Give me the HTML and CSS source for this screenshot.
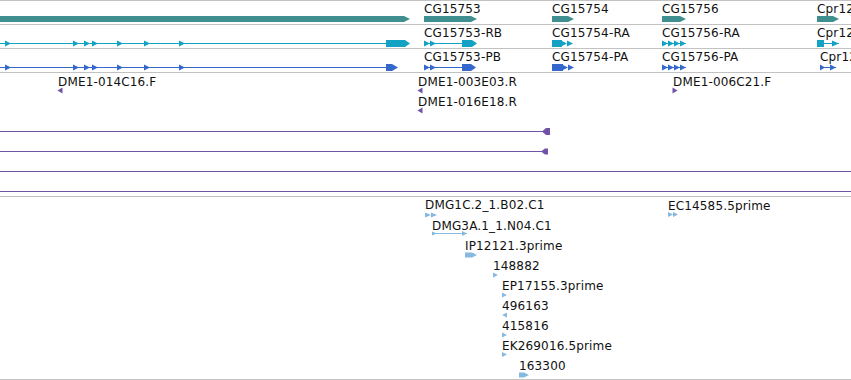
FILE: index.html
```html
<!DOCTYPE html>
<html lang="en">
  <head>
    <meta charset="UTF-8" />
    <meta name="viewport" content="width=device-width, initial-scale=1.0" />
    <title>Genome Browser</title>
    <link rel="stylesheet" href="styles.css">
  </head>

  <body>
    <div class="browser">
      <!-- genes -->
      <div class="track track-gene">
        <svg class="canvas" viewBox="0 1 851 23" width="851" height="23">
          <g class="gene">
            <polygon points="0,16 404,16 410,19 404,22 0,22" />
            <polygon points="424,16 471,16 477,19 471,22 424,22" />
            <polygon points="552,16 568,16 574,19 568,22 552,22" />
            <polygon points="662,16 680,16 686,19 680,22 662,22" />
            <polygon points="817,16 833,16 839,19 833,22 817,22" />
          </g>
          <text class="lbl" x="424" y="13">CG15753</text>
          <text class="lbl" x="552" y="13">CG15754</text>
          <text class="lbl" x="662" y="13">CG15756</text>
          <text class="lbl" x="817" y="13">Cpr12A</text>
        </svg>
      </div>

      <!-- transcripts -->
      <div class="track track-tx">
        <svg class="canvas" viewBox="0 25 851 23" width="851" height="23">
          <g class="tx">
            <line x1="0" y1="43.5" x2="386" y2="43.5" />
            <polygon points="5,40.5 11,43.5 5,46.5" />
            <polygon points="73,40.5 79,43.5 73,46.5" />
            <polygon points="84,40.5 90,43.5 84,46.5" />
            <polygon points="92,40.5 98,43.5 92,46.5" />
            <polygon points="117,40.5 123,43.5 117,46.5" />
            <polygon points="144,40.5 150,43.5 144,46.5" />
            <polygon points="179,40.5 185,43.5 179,46.5" />
            <polygon points="386,40 405,40 410,43.5 405,47 386,47" />

            <line x1="424" y1="43.5" x2="462" y2="43.5" />
            <polygon points="424,40.5 430,43.5 424,46.5" />
            <polygon points="430,40.5 436,43.5 430,46.5" />
            <polygon points="462,40 472,40 477,43.5 472,47 462,47" />

            <polygon points="552,40 562,40 562,47 552,47" />
            <polygon points="561,40.5 567,43.5 561,46.5" />
            <polygon points="567,40.5 573,43.5 567,46.5" />

            <line x1="662" y1="43.5" x2="686" y2="43.5" />
            <polygon points="662,40.5 668,43.5 662,46.5" />
            <polygon points="668,40.5 674,43.5 668,46.5" />
            <polygon points="674,40.5 680,43.5 674,46.5" />
            <polygon points="680,40.5 686,43.5 680,46.5" />

            <line x1="817" y1="43.5" x2="839" y2="43.5" />
            <polygon points="817,40 824,40 824,47 817,47" />
            <polygon points="832,40.5 839,43.5 832,46.5" />
          </g>
          <text class="lbl" x="424" y="37">CG15753-RB</text>
          <text class="lbl" x="552" y="37">CG15754-RA</text>
          <text class="lbl" x="662" y="37">CG15756-RA</text>
          <text class="lbl" x="817" y="37">Cpr12A-RA</text>
        </svg>
      </div>

      <!-- polypeptides -->
      <div class="track track-pp">
        <svg class="canvas" viewBox="0 49 851 23" width="851" height="23">
          <g class="pp">
            <line x1="0" y1="67.5" x2="386" y2="67.5" />
            <polygon points="5,64.5 11,67.5 5,70.5" />
            <polygon points="73,64.5 79,67.5 73,70.5" />
            <polygon points="84,64.5 90,67.5 84,70.5" />
            <polygon points="92,64.5 98,67.5 92,70.5" />
            <polygon points="117,64.5 123,67.5 117,70.5" />
            <polygon points="144,64.5 150,67.5 144,70.5" />
            <polygon points="179,64.5 185,67.5 179,70.5" />
            <polygon points="386,64 392,64 398,67.5 392,71 386,71" />

            <line x1="424" y1="67.5" x2="462" y2="67.5" />
            <polygon points="424,64.5 430,67.5 424,70.5" />
            <polygon points="430,64.5 436,67.5 430,70.5" />
            <polygon points="462,64 471,64 476,67.5 471,71 462,71" />

            <polygon points="552,64 563,64 563,71 552,71" />
            <polygon points="562,64.5 568,67.5 562,70.5" />
            <polygon points="568,64.5 574,67.5 568,70.5" />

            <line x1="662" y1="67.5" x2="686" y2="67.5" />
            <polygon points="662,64.5 668,67.5 662,70.5" />
            <polygon points="668,64.5 674,67.5 668,70.5" />
            <polygon points="674,64.5 680,67.5 674,70.5" />
            <polygon points="680,64.5 686,67.5 680,70.5" />

            <line x1="820" y1="67.5" x2="836" y2="67.5" />
            <polygon points="820,64.5 825,67.5 820,70.5" />
            <polygon points="830,64.5 836,67.5 830,70.5" />
          </g>
          <text class="lbl" x="424" y="61">CG15753-PB</text>
          <text class="lbl" x="552" y="61">CG15754-PA</text>
          <text class="lbl" x="662" y="61">CG15756-PA</text>
          <text class="lbl" x="820" y="61">Cpr12A-PA</text>
        </svg>
      </div>

      <!-- ESTs / BAC ends -->
      <div class="track track-est">
        <svg class="canvas" viewBox="0 73 851 123" width="851" height="123">
          <text class="lbl" x="58" y="86">DME1-014C16.F</text>
          <text class="lbl" x="418" y="86">DME1-003E03.R</text>
          <text class="lbl" x="418" y="106">DME1-016E18.R</text>
          <text class="lbl" x="673" y="86">DME1-006C21.F</text>
          <g class="est">
            <polygon points="57.5,90.5 62.5,87.5 62.5,93.5" />
            <polygon points="417.5,90.5 422.5,87.5 422.5,93.5" />
            <polygon points="417.5,110.5 422.5,107.5 422.5,113.5" />
            <polygon points="672.5,87.5 677.5,90.5 672.5,93.5" />

            <line x1="0" y1="131.5" x2="545" y2="131.5" />
            <polygon points="542,131.5 546,128 550,128 550,135 546,135" />
            <line x1="0" y1="151.5" x2="544" y2="151.5" />
            <polygon points="541,151.5 545,148.5 548,148.5 548,154.5 545,154.5" />
            <line x1="0" y1="171.5" x2="851" y2="171.5" />
            <line x1="0" y1="191.5" x2="851" y2="191.5" />
          </g>
        </svg>
      </div>

      <!-- cDNA / EST hits -->
      <div class="track track-cdna">
        <svg class="canvas" viewBox="0 197 851 182" width="851" height="182">
          <text class="lbl" x="425" y="209">DMG1C.2_1.B02.C1</text>
          <text class="lbl" x="432" y="230">DMG3A.1_1.N04.C1</text>
          <text class="lbl" x="465" y="250">IP12121.3prime</text>
          <text class="lbl" x="493" y="270">148882</text>
          <text class="lbl" x="502" y="290">EP17155.3prime</text>
          <text class="lbl" x="502" y="310">496163</text>
          <text class="lbl" x="502" y="330">415816</text>
          <text class="lbl" x="502" y="350">EK269016.5prime</text>
          <text class="lbl" x="519" y="370">163300</text>
          <text class="lbl" x="668" y="210">EC14585.5prime</text>
          <g class="cdna">
            <polygon points="425,212.5 431,215 425,217.5" />
            <polygon points="431,212.5 437,215 431,217.5" />

            <line x1="432" y1="233.5" x2="467" y2="233.5" />
            <polygon points="432,231.5 437,233.5 432,235.5" />
            <polygon points="462,231 467,233.5 462,236" />

            <polygon points="465,252.5 472,252.5 477,255 472,257.5 465,257.5" />
            <polygon points="493,272.5 498,275 493,277.5" />
            <polygon points="502,292.5 507,295 502,297.5" />
            <polygon points="502,315 507,312.5 507,317.5" />
            <polygon points="502,332.5 507,335 502,337.5" />
            <polygon points="502,352 507,354.5 502,357" />
            <polygon points="519,372.5 524,372.5 529,375 524,377.5 519,377.5" />

            <polygon points="668,212 673,214.5 668,217" />
            <polygon points="673,212 678,214.5 673,217" />
          </g>
        </svg>
      </div>
    </div>
  </body>
</html>
```

FILE: styles.css
```css
body {
  margin: 0;
  padding: 0;
  background-color: #fff;
  font-family: "DejaVu Sans", sans-serif;
}

.browser {
  display: flex;
  flex-direction: column;
  width: 851px;
  height: 380px;
  overflow: hidden;
  border-bottom: 1px solid #c2c2c2;
  box-sizing: border-box;
}

.track {
  border-top: 1px solid #c2c2c2;
  flex: none;
}

.track-gene,
.track-tx,
.track-pp {
  height: 23px;
}

.track-est {
  height: 123px;
}

.track-cdna {
  height: 182px;
}

.canvas {
  display: block;
}

.lbl {
  font-family: "DejaVu Sans", sans-serif;
  font-size: 12px;
  letter-spacing: 0.15px;
  fill: #111;
}

.gene {
  fill: #3f8f90;
}

.tx {
  fill: #14a2c4;
  stroke: #14a2c4;
}

.pp {
  fill: #3468cc;
  stroke: #3468cc;
}

.est {
  fill: #7052a6;
  stroke: #7052a6;
}

.cdna {
  fill: #85b9e0;
  stroke: #85b9e0;
}

.tx polygon,
.pp polygon,
.est polygon,
.cdna polygon {
  stroke: none;
}

.tx line,
.pp line,
.est line,
.cdna line {
  stroke-width: 1;
}
```
